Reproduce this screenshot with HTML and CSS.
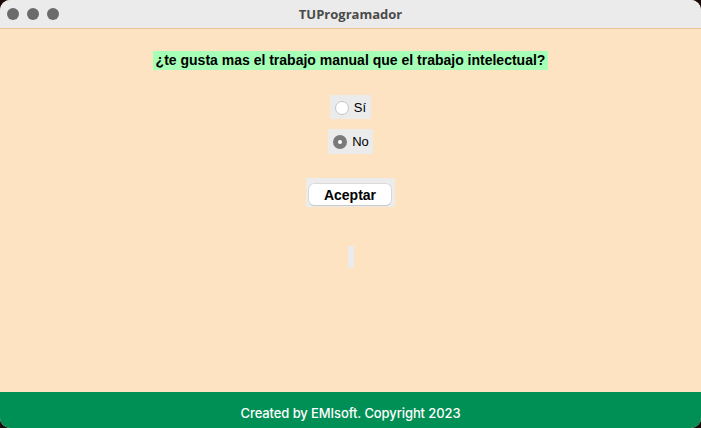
FILE: index.html
```html
<!DOCTYPE html>
<html lang="es">
<head>
<meta charset="utf-8">
<title>TUProgramador</title>
<link rel="stylesheet" href="styles.css">
</head>
<body>
<div class="window">
  <div class="titlebar">
    <div class="lights">
      <span class="light"></span><span class="light"></span><span class="light"></span>
    </div>
    <div class="title">TUProgramador</div>
  </div>
  <div class="content">
    <div class="question">¿te gusta mas el trabajo manual que el trabajo intelectual?</div>
    <label class="radio radio-si"><span class="dot"></span><span>Sí</span></label>
    <label class="radio radio-no"><span class="dot checked"></span><span>No</span></label>
    <div class="btn-wrap"><button class="btn">Aceptar</button></div>
    <div class="result"></div>
  </div>
  <div class="footer">Created by EMIsoft. Copyright 2023</div>
</div>
</body>
</html>
```
FILE: styles.css
```css
html, body {
  margin: 0;
  padding: 0;
  background: #1a0b0b;
}
.window {
  width: 701px;
  height: 428px;
  border-radius: 10px;
  overflow: hidden;
  display: flex;
  flex-direction: column;
  background: #fee3c2;
}
.titlebar {
  height: 28px;
  background: #ebebeb;
  border-bottom: 1px solid #e8c59d;
  position: relative;
  display: flex;
  align-items: center;
  justify-content: center;
  flex: none;
}
.lights {
  position: absolute;
  left: 7px;
  top: 8px;
  display: flex;
  gap: 8px;
}
.light {
  width: 12px;
  height: 12px;
  border-radius: 50%;
  background: #6b6b6b;
}
.title {
  font-family: "Open Sans", "DejaVu Sans", sans-serif;
  font-weight: 700;
  font-size: 13px;
  color: #4a4a4a;
}
.content {
  flex: 1;
  display: flex;
  flex-direction: column;
  align-items: center;
  font-family: "Liberation Sans", Arial, sans-serif;
}
.question {
  margin-top: 22px;
  background: #a6ffb6;
  font-weight: 700;
  font-size: 14px;
  line-height: 19px;
  padding: 0 3px;
  color: #000;
}
.radio {
  display: flex;
  align-items: center;
  background: #ebebeb;
  font-size: 13px;
  color: #000;
  gap: 5px;
}
.radio-si {
  margin-top: 25px;
  height: 23px;
  padding: 1px 5px 0 5px;
}
.radio-no {
  margin-top: 10px;
  height: 25px;
  padding: 0 4px 0 5px;
}
.dot {
  width: 12px;
  height: 12px;
  border-radius: 50%;
  background: #fff;
  border: 1px solid #c4c4c4;
  box-sizing: content-box;
}
.dot.checked {
  width: 4px;
  height: 4px;
  border: 5px solid #7a7a7a;
  background: #fff;
}
.btn-wrap {
  margin-top: 24px;
  background: #ececec;
  padding: 6px 4px 2px 3px;
  display: flex;
}
.btn {
  width: 82px;
  height: 21px;
  border: none;
  border-radius: 5px;
  background: #fff;
  box-shadow: 0 0 0 0.5px #c8c8c8, 0 1px 1px rgba(0,0,0,0.15);
  font-family: "Liberation Sans", Arial, sans-serif;
  font-weight: 700;
  font-size: 14px;
  color: #000;
  padding: 0;
}
.result {
  margin-top: 39px;
  width: 6px;
  height: 22px;
  background: #ebebeb;
}
.footer {
  height: 36px;
  flex: none;
  background: #008f54;
  color: #fff;
  font-family: "Inter", "Open Sans", sans-serif;
  font-weight: 500;
  font-size: 13px;
  letter-spacing: -0.1px;
  display: flex;
  align-items: center;
  justify-content: center;
  padding-top: 6px;
  box-sizing: border-box;
}
```
